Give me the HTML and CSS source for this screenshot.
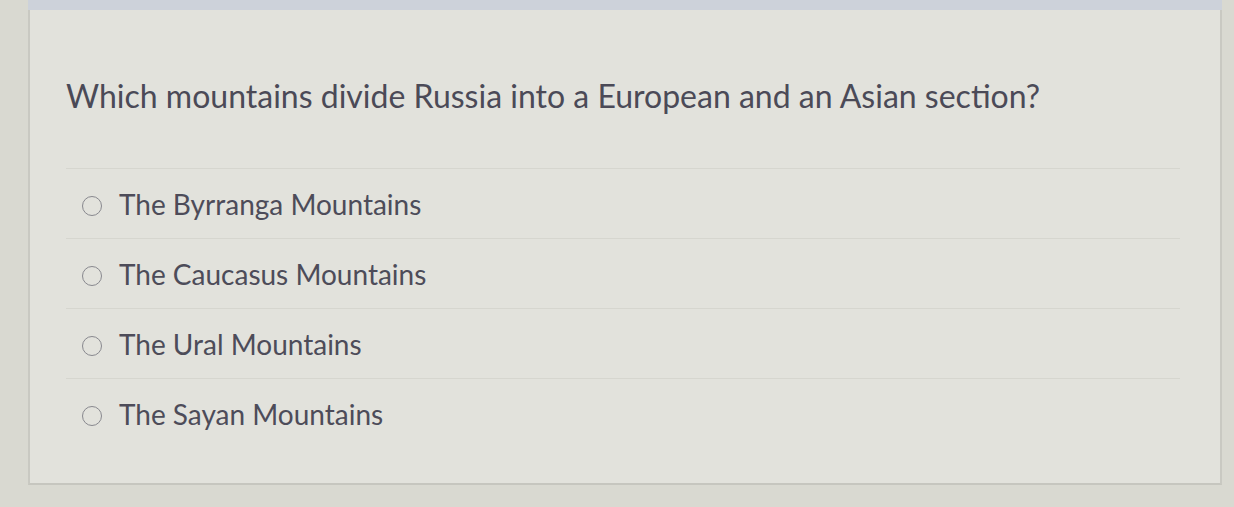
FILE: index.html
```html
<!DOCTYPE html>
<html lang="en">
<head>
    <meta charset="UTF-8">
    <title>Question</title>
    <link rel="stylesheet" href="styles.css">
</head>
<body>
    <div class="frame">
        <div class="panel">
            <div class="question">Which mountains divide Russia into a European and an Asian section?</div>
            <ul class="answers">
                <li><span class="radio"></span>The Byrranga Mountains</li>
                <li><span class="radio"></span>The Caucasus Mountains</li>
                <li><span class="radio"></span>The Ural Mountains</li>
                <li><span class="radio"></span>The Sayan Mountains</li>
            </ul>
        </div>
    </div>
</body>
</html>
```

FILE: styles.css
```css
body {
    margin: 0;
    background: #d9d9d1;
    font-family: Lato, 'Open Sans', sans-serif;
    height: 507px;
    overflow: hidden;
}
.frame {
    margin-left: 28px;
    width: 1194px;
    border-top: 10px solid #cdd2da;
}
.panel {
    height: 475px;
    background: #e2e2dc;
    border-left: 2px solid #c9c9c2;
    border-right: 2px solid #c9c9c2;
    border-bottom: 2px solid #c6c6bf;
    box-sizing: border-box;
    padding: 0 40px 0 36px;
}
.question {
    padding-top: 66px;
    height: 92px;
    font-size: 32px;
    color: #4b4a57;
}
.answers {
    list-style: none;
    margin: 0;
    padding: 0;
}
.answers li {
    display: flex;
    align-items: center;
    height: 69px;
    border-top: 1px solid #d6d6cf;
    font-size: 28px;
    color: #4d4c59;
    padding-left: 16px;
}
.radio {
    width: 18px;
    height: 18px;
    border: 1.5px solid #88888e;
    border-radius: 50%;
    margin-right: 17px;
    margin-top: 5px;
}
```
